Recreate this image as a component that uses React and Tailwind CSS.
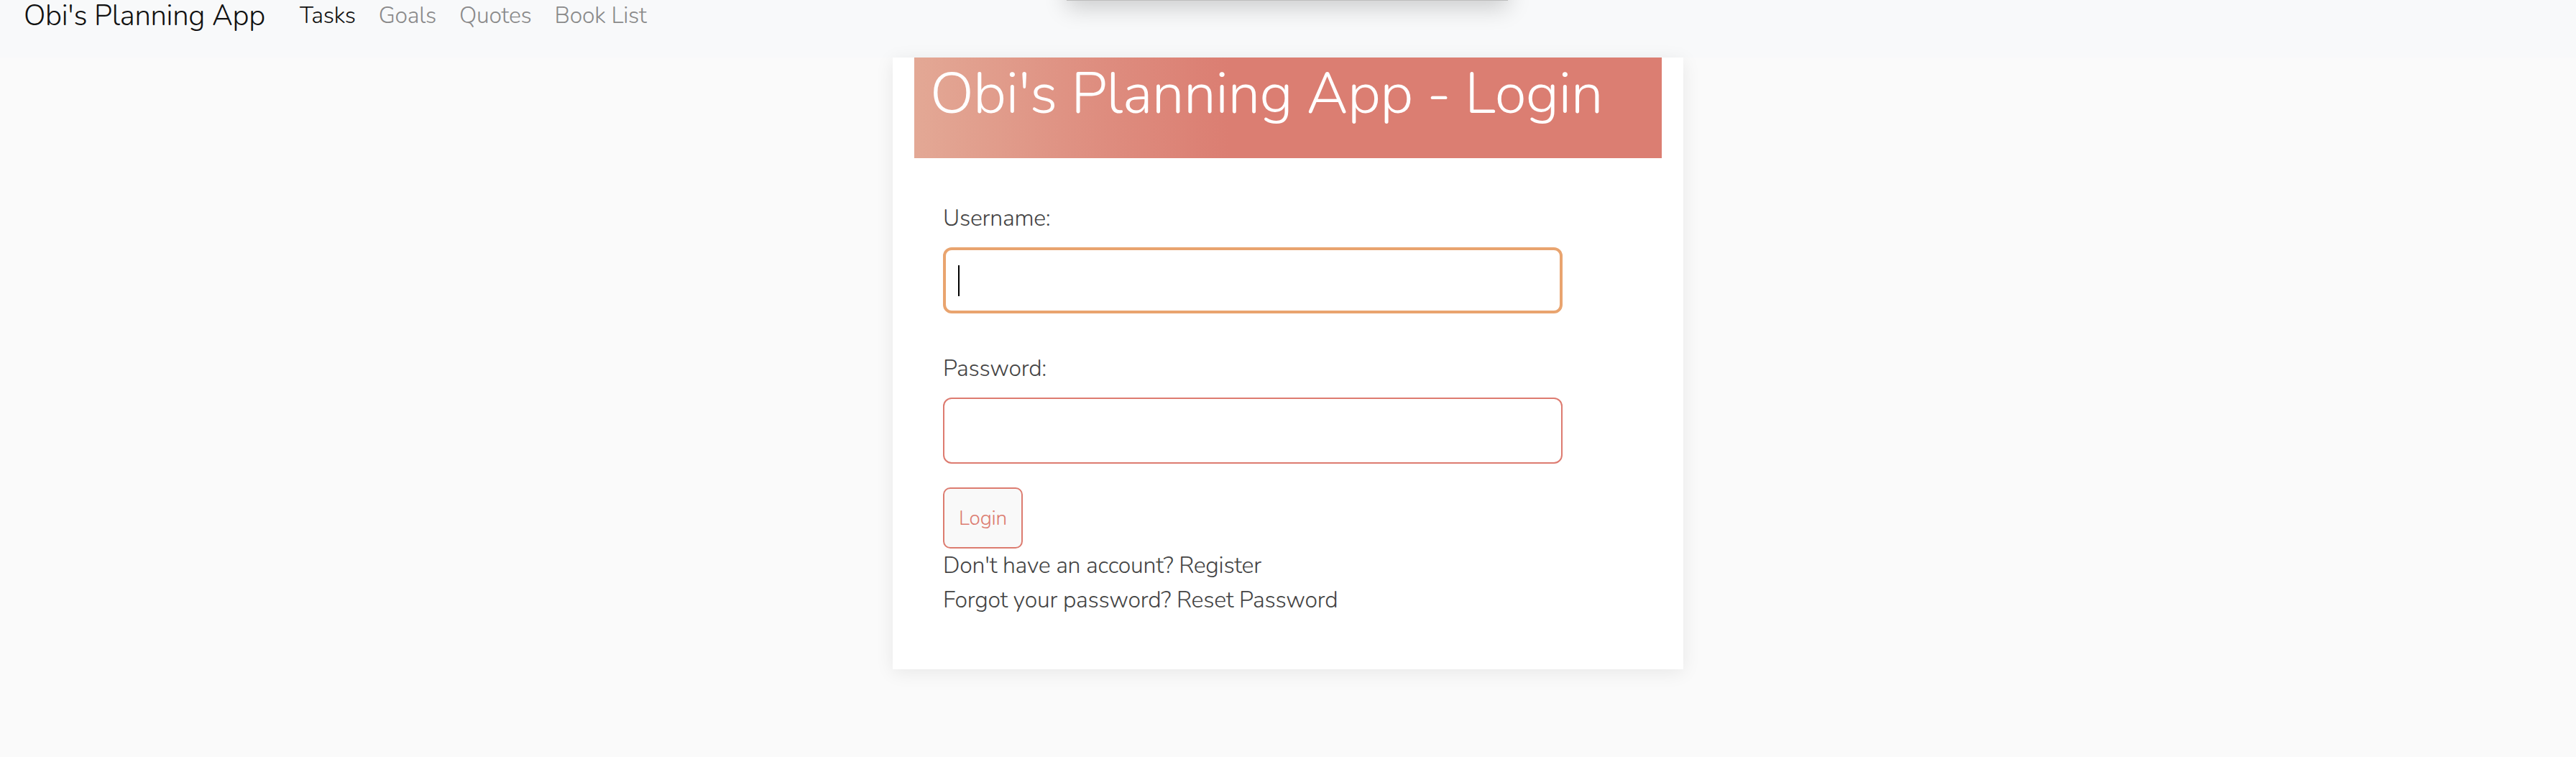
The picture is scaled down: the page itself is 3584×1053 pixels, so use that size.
import React from 'react';

const navLinks = [
  { label: 'Tasks', active: true },
  { label: 'Goals' },
  { label: 'Quotes' },
  { label: 'Book List' },
];

export default function App() {
  return (
    <div className="relative min-h-[1053px] bg-[#fafafa] font-['Nunito','Lato',sans-serif] font-light text-[#444] tracking-[-0.25px] overflow-hidden">
      {/* top navbar */}
      <nav className="h-[80px] bg-[#f8f9fa] flex items-start px-[33px] pt-[2px]">
        <span className="text-[40px] leading-[40px] text-[#111] mr-[32px] tracking-[-0.3px]">Obi's Planning App</span>
        <div className="flex items-start">
          {navLinks.map((link) => (
            <span
              key={link.label}
              className={`text-[32px] leading-[40px] px-[16px] ${link.active ? 'text-[#111]' : 'text-[#8a8a8a]'}`}
            >
              {link.label}
            </span>
          ))}
        </div>
      </nav>

      {/* toast peeking from above */}
      <div className="absolute left-[1484px] top-[-200px] w-[614px] h-[201px] bg-[#bdbdbd] shadow-[0_10px_30px_rgba(0,0,0,0.18)]"></div>

      {/* login card */}
      <div className="flex justify-center">
        <div className="w-[1100px] bg-white px-[30px] pb-[72px] shadow-[0_4px_24px_rgba(0,0,0,0.08)]">
          <div className="h-[140px] bg-[linear-gradient(90deg,#e3a895_0%,#de8d7f_25%,#db7e72_42%,#db7e72_100%)] px-[22px] pt-[3px]">
            <h1 className="text-[80px] leading-[96px] text-white font-light tracking-[-0.6px]">Obi's Planning App - Login</h1>
          </div>

          <form className="px-[40px] pt-[60px]">
            <label className="block text-[32px] leading-[48px] mb-[16px]">Username:</label>
            <div className="relative w-[862px] h-[92px] rounded-[12px] border-[4px] border-[#e9a46f] bg-white">
              <span className="absolute left-[17px] top-[21px] w-[2px] h-[43px] bg-black"></span>
            </div>

            <label className="block text-[32px] leading-[48px] mt-[53px] mb-[16px]">Password:</label>
            <div className="w-[862px] h-[92px] rounded-[12px] border-[2px] border-[#dd7b70] bg-white"></div>

            <button
              type="button"
              className="mt-[33px] h-[85px] px-[20px] rounded-[10px] border-[2px] border-[#dc7c70] bg-[#f9f9f9] text-[28px] text-[#dc7c70] font-light"
            >
              Login
            </button>

            <p className="text-[32px] leading-[48px]">Don't have an account? Register</p>
            <p className="text-[32px] leading-[48px]">Forgot your password? Reset Password</p>
          </form>
        </div>
      </div>
    </div>
  );
}
